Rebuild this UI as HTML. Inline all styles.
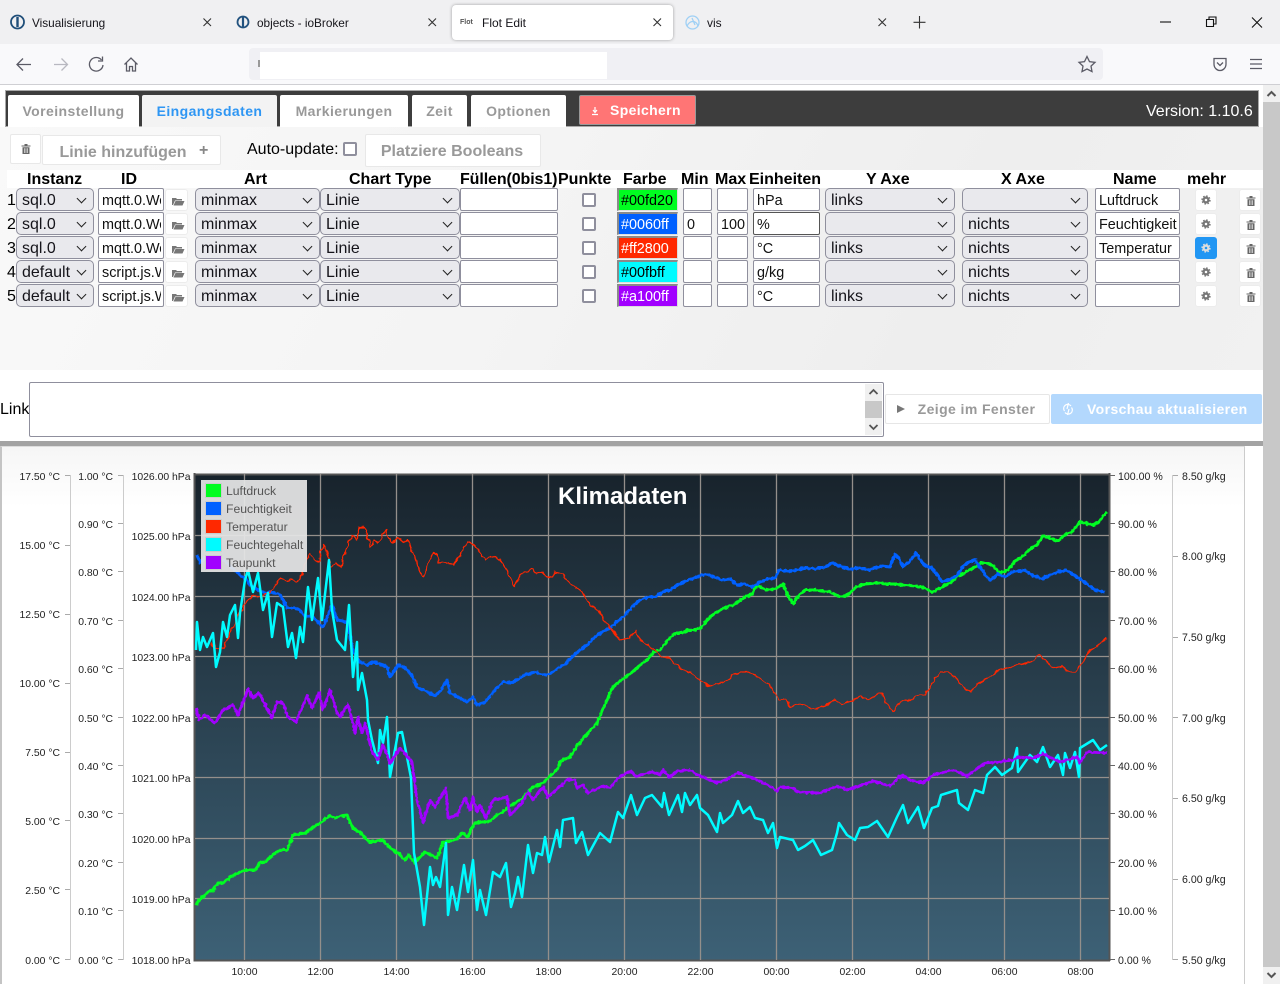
<!DOCTYPE html>
<html lang="de"><head><meta charset="utf-8"><title>Flot Edit</title>
<style>
*{box-sizing:border-box}
html,body{margin:0;padding:0;width:1280px;height:984px;overflow:hidden;background:#fff;font-family:"Liberation Sans",Arial,sans-serif;color:#000}
.a{position:absolute}
.t{position:absolute;font-size:12px;line-height:14px;color:#15141a;white-space:nowrap}
.tab{position:absolute;top:95px;height:32px;background:#fff;border-radius:2px 2px 0 0;color:#999;font-weight:bold;font-size:14px;letter-spacing:.42px;text-align:center;line-height:33px}
.btn{position:absolute;background:#fff;border:1px solid #e8e8e8;border-radius:2px;color:#999;font-weight:bold;font-size:16px;text-align:center}
.h{position:absolute;top:171px;font-size:16px;font-weight:bold;line-height:17px;white-space:nowrap}
.n{position:absolute;left:7px;font-size:16px;line-height:24px}
.s{position:absolute;height:23px;background:#e9e9ed;border:1px solid #8f8f9d;border-radius:5px;font-size:16px;line-height:23px;padding-left:5px;white-space:nowrap;overflow:hidden;color:#15141a}
.s:after{content:"";position:absolute;right:8px;top:6px;width:6px;height:6px;border-right:1.6px solid #222;border-bottom:1.6px solid #222;transform:rotate(45deg)}
.i{position:absolute;height:23px;background:#fff;border:1px solid #8f8f9d;border-radius:2px;font-size:14.4px;line-height:24px;padding-left:3px;white-space:nowrap;overflow:hidden;color:#111}
.i span{display:block;width:59px;overflow:hidden}
.c{position:absolute;left:582px;width:14px;height:14px;border:2px solid #8f8f9d;border-radius:2px;background:#fff}
.f{position:absolute;left:617px;width:61px;height:23px;border-top:2px solid #8a8a8a;border-left:2px solid #8a8a8a;border-right:1px solid #ddd;border-bottom:1px solid #ddd;font-size:14.4px;line-height:23px;padding-left:2px;white-space:nowrap;overflow:hidden}
.ib{position:absolute;width:22px;height:22px;background:#fff;border:1px solid #ececec;border-radius:3px}
.ib svg{position:absolute;left:5px;top:5px}
.ib.g svg{left:5px;top:5px}
text{font-family:"Liberation Sans",Arial,sans-serif}
</style></head><body>
<svg width="0" height="0" style="position:absolute"><defs>
<symbol id="tr" viewBox="0 0 12 12"><path d="M1.500 2.500H10.500V3.500H1.500ZM4.500 1H7.500V2.500H4.500ZM2.500 4.300H9.500V11H2.500Z" fill="currentColor"/><path d="M4.500 5.300V10M6 5.300V10M7.500 5.300V10" stroke="#fff" stroke-width=".6"/></symbol>
<symbol id="ge" viewBox="0 0 12 12"><circle cx="6" cy="6" r="2.900" fill="none" stroke="currentColor" stroke-width="2.800"/><circle cx="6" cy="6" r="4.700" fill="none" stroke="currentColor" stroke-width="1.800" stroke-dasharray="1.900 1.790"/></symbol>
<symbol id="fo" viewBox="0 0 14 12"><path d="M1 3H5L6 4H11V5.500H4L2 10H1ZM4.500 6H13.500L11.500 10.500H2.500Z" fill="currentColor"/></symbol>
<filter id="jg" filterUnits="userSpaceOnUse" x="190" y="470" width="925" height="495"><feTurbulence type="fractalNoise" baseFrequency="0.35" numOctaves="1" seed="4" result="n"/><feDisplacementMap in="SourceGraphic" in2="n" scale="3.500" xChannelSelector="R" yChannelSelector="G"/></filter>
<filter id="jr" filterUnits="userSpaceOnUse" x="190" y="470" width="925" height="495"><feTurbulence type="fractalNoise" baseFrequency="0.22" numOctaves="1" seed="9" result="n"/><feDisplacementMap in="SourceGraphic" in2="n" scale="5" xChannelSelector="R" yChannelSelector="G"/></filter>
</defs></svg>

<!-- browser chrome -->
<div class="a" style="left:0;top:0;width:1280px;height:44px;background:#f0f0f2"></div>
<div class="a" style="left:0;top:44px;width:1280px;height:40px;background:#f9f9fb"></div>
<div class="a" style="left:0;top:84px;width:1280px;height:1px;background:#cfcfd3"></div>
<div class="a" style="left:452px;top:5px;width:221px;height:35px;background:#fff;border-radius:4px;box-shadow:0 0 3px rgba(0,0,0,.35)"></div>
<div class="a" style="left:249px;top:48px;width:854px;height:32px;background:#f0f0f4;border-radius:4px"></div>
<div class="a" style="left:260px;top:52px;width:347px;height:27px;background:#fff"></div>
<div class="a" style="left:258px;top:60px;width:2px;height:7px;background:#999"></div>
<svg class="a" style="left:0;top:0" width="1280" height="84" fill="none">
<g stroke="#1f4e79" stroke-width="1.800"><circle cx="17.500" cy="22" r="6.500"/><path d="M17.500 17V27" stroke-width="2.400"/></g>
<g stroke="#22527f" stroke-width="1.800"><circle cx="243" cy="22" r="5.500"/><path d="M243 17V27" stroke-width="2.200"/></g>
<g stroke="#9fd0f5" stroke-width="1.300"><circle cx="692.500" cy="22.500" r="6.500"/><path d="M692 18L695 25M687 26C690 20 696 20 698 26"/></g>
<g stroke="#333" stroke-width="1.100"><path d="M203.500 18.500L211 26M211 18.500L203.500 26M428.500 18.500L436 26M436 18.500L428.500 26M653.500 18.500L661 26M661 18.500L653.500 26M878.500 18.500L886 26M886 18.500L878.500 26"/><path d="M919.500 16V28.500M913.500 22.300H925.500"/>
<path d="M1160 22H1171" stroke="#111"/><path d="M1206.500 19.500H1213.500V26.500H1206.500ZM1209 19.500V17H1216V24H1213.500" stroke="#111"/><path d="M1252 17.500L1262 27.500M1262 17.500L1252 27.500" stroke="#111"/></g>
<g stroke="#5b5b66" stroke-width="1.300"><path d="M31 64.500H17.500M23 58.500L17 64.500L23 70.500"/><path d="M54 64.500H67.500M61.500 58.500L67.500 64.500L61.500 70.500" stroke="#b8b8c0"/>
<path d="M101.500 60A6.800 6.800 0 1 0 103 65" /><path d="M102.500 56.500V61H98"/><path d="M124.500 64.500L131 58L137.500 64.500M126.500 63V71H129.500V66.500H132.500V71H135.500V63"/>
<path d="M1087 56.500L1089.500 61.600L1095 62.300L1091 66.100L1092 71.600L1087 69L1082 71.600L1083 66.100L1079 62.300L1084.500 61.600Z"/>
<path d="M1214 58.500H1226V64C1226 68 1223 70.500 1220 70.500C1217 70.500 1214 68 1214 64Z"/><path d="M1217 62.500L1220 65.500L1223 62.500"/><path d="M1250 59.500H1262M1250 64H1262M1250 68.500H1262"/></g>
</svg>
<div class="t" style="left:32px;top:16px;font-size:11.800px">Visualisierung</div>
<div class="t" style="left:257px;top:16px;font-size:11.800px">objects - ioBroker</div>
<div class="t" style="left:482px;top:16px">Flot Edit</div>
<div class="t" style="left:460px;top:18px;font-size:7px;line-height:9px;font-weight:bold;color:#555">Flot</div>
<div class="t" style="left:707px;top:16px">vis</div>

<!-- scrollbar -->
<div class="a" style="left:1263px;top:85px;width:17px;height:899px;background:#f0f0f0"></div>
<div class="a" style="left:1263px;top:102px;width:17px;height:865px;background:#c8c8c8"></div>
<svg class="a" style="left:1263px;top:85px" width="17" height="899" fill="none" stroke="#555" stroke-width="2"><path d="M4.500 11L8.500 7L12.500 11"/><path d="M4.500 888L8.500 892L12.500 888"/></svg>

<!-- editor panel -->
<div class="a" style="left:0;top:127px;width:1263px;height:243px;background:linear-gradient(115deg,#f9f9f9 0%,#f4f4f4 40%,#eeeeee 75%,#f1f1f1 100%)"></div>
<div class="a" style="left:5px;top:90px;width:1254px;height:37px;background:#3d3d3d;border:1px solid #a8a8a8;border-bottom:1px solid #aaa"></div>
<div class="tab" style="left:8px;width:131px">Voreinstellung</div>
<div class="tab" style="left:142px;width:135px;color:#2e96f3;background:#f3f3f3">Eingangsdaten</div>
<div class="tab" style="left:280px;width:128px">Markierungen</div>
<div class="tab" style="left:412px;width:55px">Zeit</div>
<div class="tab" style="left:471px;width:95px">Optionen</div>
<div class="a" style="left:579px;top:95px;width:117px;height:30px;background:#ff7575;border:1px solid #999;border-radius:2px;color:#fff;font-weight:bold;font-size:14px;letter-spacing:.35px;line-height:28px;padding-left:30px">Speichern</div>
<svg class="a" style="left:590px;top:106px" width="10" height="10" fill="none" stroke="#fff" stroke-width="1.200"><path d="M5 1V6M3 4L5 6.500L7 4M2 8.500H8"/></svg>
<div class="a" style="left:1146px;top:102px;color:#fff;font-size:16px;line-height:19px;white-space:nowrap">Version: 1.10.6</div>

<div class="btn" style="left:10px;top:134px;width:31px;height:30px;color:#666"><svg class="a" style="left:9px;top:8px" width="12" height="12"><use href="#tr"/></svg></div>
<div class="btn" style="left:42px;top:135px;width:179px;height:30px;line-height:33px;padding-right:17px">Linie hinzufügen</div>
<div class="a" style="left:199px;top:143px;color:#888;font-weight:bold;font-size:16px;line-height:16px">+</div>
<div class="a" style="left:247px;top:141px;font-size:16px;line-height:18px;white-space:nowrap">Auto-update:</div>
<div class="a" style="left:343px;top:142px;width:14px;height:14px;border:2px solid #8f8f9d;border-radius:2px;background:#fff"></div>
<div class="btn" style="left:365px;top:134px;width:176px;height:33px;line-height:33px;padding-right:2px">Platziere Booleans</div>

<!-- table header -->
<div class="a" style="left:7px;top:170px;width:1256px;height:18px;background:#fff"></div>
<div class="h" style="left:27px">Instanz</div><div class="h" style="left:121px">ID</div><div class="h" style="left:244px">Art</div><div class="h" style="left:349px">Chart Type</div><div class="h" style="left:460px;letter-spacing:-.1px">Füllen(0bis1)</div><div class="h" style="left:558px">Punkte</div><div class="h" style="left:623px">Farbe</div><div class="h" style="left:681px">Min</div><div class="h" style="left:715px">Max</div><div class="h" style="left:749px">Einheiten</div><div class="h" style="left:866px">Y Axe</div><div class="h" style="left:1001px">X Axe</div><div class="h" style="left:1113px">Name</div><div class="h" style="left:1187px">mehr</div>

<!-- row 1 -->
<div class="n" style="top:189px">1</div>
<div class="s" style="left:16px;top:188px;width:78px">sql.0</div>
<div class="i" style="left:98px;top:188px;width:66px"><span>mqtt.0.Wo</span></div>
<div class="ib" style="left:165px;top:189px;width:23px;color:#777"><svg width="14" height="12"><use href="#fo"/></svg></div>
<div class="s" style="left:195px;top:188px;width:125px">minmax</div>
<div class="s" style="left:320px;top:188px;width:140px">Linie</div>
<div class="i" style="left:460px;top:188px;width:98px"></div>
<div class="c" style="top:193px"></div>
<div class="f" style="top:188px;background:#00fd20;color:#000">#00fd20</div>
<div class="i" style="left:683px;top:188px;width:29px"></div>
<div class="i" style="left:717px;top:188px;width:31px"></div>
<div class="i" style="left:753px;top:188px;width:67px">hPa</div>
<div class="s" style="left:825px;top:188px;width:130px">links</div>
<div class="s" style="left:962px;top:188px;width:126px"></div>
<div class="i" style="left:1095px;top:188px;width:85px">Luftdruck</div>
<div class="ib g" style="left:1195px;top:189px;color:#777"><svg width="10" height="10"><use href="#ge"/></svg></div>
<div class="ib" style="left:1239px;top:189px;color:#666"><svg width="12" height="12"><use href="#tr"/></svg></div>
<!-- row 2 -->
<div class="n" style="top:213px">2</div>
<div class="s" style="left:16px;top:212px;width:78px">sql.0</div>
<div class="i" style="left:98px;top:212px;width:66px"><span>mqtt.0.Wo</span></div>
<div class="ib" style="left:165px;top:213px;width:23px;color:#777"><svg width="14" height="12"><use href="#fo"/></svg></div>
<div class="s" style="left:195px;top:212px;width:125px">minmax</div>
<div class="s" style="left:320px;top:212px;width:140px">Linie</div>
<div class="i" style="left:460px;top:212px;width:98px"></div>
<div class="c" style="top:217px"></div>
<div class="f" style="top:212px;background:#0060ff;color:#fff">#0060ff</div>
<div class="i" style="left:683px;top:212px;width:29px">0</div>
<div class="i" style="left:717px;top:212px;width:31px">100</div>
<div class="i" style="left:753px;top:212px;width:67px;border-color:#555">%</div>
<div class="s" style="left:825px;top:212px;width:130px"></div>
<div class="s" style="left:962px;top:212px;width:126px">nichts</div>
<div class="i" style="left:1095px;top:212px;width:85px">Feuchtigkeit</div>
<div class="ib g" style="left:1195px;top:213px;color:#777"><svg width="10" height="10"><use href="#ge"/></svg></div>
<div class="ib" style="left:1239px;top:213px;color:#666"><svg width="12" height="12"><use href="#tr"/></svg></div>
<!-- row 3 -->
<div class="n" style="top:237px">3</div>
<div class="s" style="left:16px;top:236px;width:78px">sql.0</div>
<div class="i" style="left:98px;top:236px;width:66px"><span>mqtt.0.Wo</span></div>
<div class="ib" style="left:165px;top:237px;width:23px;color:#777"><svg width="14" height="12"><use href="#fo"/></svg></div>
<div class="s" style="left:195px;top:236px;width:125px">minmax</div>
<div class="s" style="left:320px;top:236px;width:140px">Linie</div>
<div class="i" style="left:460px;top:236px;width:98px"></div>
<div class="c" style="top:241px"></div>
<div class="f" style="top:236px;background:#ff2800;color:#fff">#ff2800</div>
<div class="i" style="left:683px;top:236px;width:29px"></div>
<div class="i" style="left:717px;top:236px;width:31px"></div>
<div class="i" style="left:753px;top:236px;width:67px">°C</div>
<div class="s" style="left:825px;top:236px;width:130px">links</div>
<div class="s" style="left:962px;top:236px;width:126px">nichts</div>
<div class="i" style="left:1095px;top:236px;width:85px">Temperatur</div>
<div class="ib g" style="left:1195px;top:237px;color:#ddd;background:#2196f3;border-color:#2196f3"><svg width="10" height="10"><use href="#ge"/></svg></div>
<div class="ib" style="left:1239px;top:237px;color:#666"><svg width="12" height="12"><use href="#tr"/></svg></div>
<!-- row 4 -->
<div class="n" style="top:261px">4</div>
<div class="s" style="left:16px;top:260px;width:78px">default</div>
<div class="i" style="left:98px;top:260px;width:66px"><span>script.js.W</span></div>
<div class="ib" style="left:165px;top:261px;width:23px;color:#777"><svg width="14" height="12"><use href="#fo"/></svg></div>
<div class="s" style="left:195px;top:260px;width:125px">minmax</div>
<div class="s" style="left:320px;top:260px;width:140px">Linie</div>
<div class="i" style="left:460px;top:260px;width:98px"></div>
<div class="c" style="top:265px"></div>
<div class="f" style="top:260px;background:#00fbff;color:#000">#00fbff</div>
<div class="i" style="left:683px;top:260px;width:29px"></div>
<div class="i" style="left:717px;top:260px;width:31px"></div>
<div class="i" style="left:753px;top:260px;width:67px">g/kg</div>
<div class="s" style="left:825px;top:260px;width:130px"></div>
<div class="s" style="left:962px;top:260px;width:126px">nichts</div>
<div class="i" style="left:1095px;top:260px;width:85px"></div>
<div class="ib g" style="left:1195px;top:261px;color:#777"><svg width="10" height="10"><use href="#ge"/></svg></div>
<div class="ib" style="left:1239px;top:261px;color:#666"><svg width="12" height="12"><use href="#tr"/></svg></div>
<!-- row 5 -->
<div class="n" style="top:285px">5</div>
<div class="s" style="left:16px;top:284px;width:78px">default</div>
<div class="i" style="left:98px;top:284px;width:66px"><span>script.js.W</span></div>
<div class="ib" style="left:165px;top:285px;width:23px;color:#777"><svg width="14" height="12"><use href="#fo"/></svg></div>
<div class="s" style="left:195px;top:284px;width:125px">minmax</div>
<div class="s" style="left:320px;top:284px;width:140px">Linie</div>
<div class="i" style="left:460px;top:284px;width:98px"></div>
<div class="c" style="top:289px"></div>
<div class="f" style="top:284px;background:#a100ff;color:#fff">#a100ff</div>
<div class="i" style="left:683px;top:284px;width:29px"></div>
<div class="i" style="left:717px;top:284px;width:31px"></div>
<div class="i" style="left:753px;top:284px;width:67px">°C</div>
<div class="s" style="left:825px;top:284px;width:130px">links</div>
<div class="s" style="left:962px;top:284px;width:126px">nichts</div>
<div class="i" style="left:1095px;top:284px;width:85px"></div>
<div class="ib g" style="left:1195px;top:285px;color:#777"><svg width="10" height="10"><use href="#ge"/></svg></div>
<div class="ib" style="left:1239px;top:285px;color:#666"><svg width="12" height="12"><use href="#tr"/></svg></div>

<!-- link row -->
<div class="a" style="left:0;top:401px;font-size:16px;line-height:18px">Link</div>
<div class="a" style="left:29px;top:382px;width:855px;height:55px;background:#fff;border:1px solid #8f8f9d;border-radius:2px"></div>
<div class="a" style="left:865px;top:384px;width:17px;height:51px;background:#f0f0f0"></div>
<div class="a" style="left:865px;top:401px;width:17px;height:17px;background:#c8c8c8"></div>
<svg class="a" style="left:865px;top:384px" width="17" height="51" fill="none" stroke="#555" stroke-width="1.800"><path d="M4.500 10L8.500 6L12.500 10"/><path d="M4.500 41L8.500 45L12.500 41"/></svg>
<div class="btn" style="left:885px;top:394px;width:165px;height:30px;font-size:14px;letter-spacing:.4px;line-height:29px;padding-left:18px;border-color:#e6e6e6">Zeige im Fenster</div>
<div class="a" style="left:897px;top:405px;width:0;height:0;border-left:8px solid #777;border-top:4px solid transparent;border-bottom:4px solid transparent"></div>
<div class="a" style="left:1051px;top:394px;width:211px;height:30px;background:#b3d8fd;border-radius:2px;color:#fff;font-weight:bold;font-size:14px;letter-spacing:.38px;line-height:30px;padding-left:36px;white-space:nowrap">Vorschau aktualisieren</div>
<svg class="a" style="left:1061px;top:402px" width="14" height="14" fill="none" stroke="#fff" stroke-width="1.200"><path d="M10 4A4 4 0 0 0 3.500 9M4 10.500A4 4 0 0 0 10.500 5.500M7.500 1L6 7M8 7L6.500 13"/></svg>

<!-- chart -->
<div class="a" style="left:0;top:441px;width:1263px;height:5px;background:#a3a3a3"></div>
<div class="a" style="left:0;top:446px;width:1245px;height:538px;background:linear-gradient(#f6f6f6,#ffffff 60px);border-left:2px solid #c4c4c4;border-top:1px solid #ddd;border-right:1px solid #ccc"></div>
<svg class="a" style="left:0;top:0" width="1280" height="984">
<defs><linearGradient id="pg" x1="0" y1="0" x2="0" y2="1"><stop offset="0" stop-color="#18232c"/><stop offset="1" stop-color="#3d6176"/></linearGradient></defs>
<rect x="195" y="474" width="914" height="486" fill="url(#pg)"/>
<path d="M195 474.500H1110M194.500 473V961.500M194 960.500H1110M1109.500 473V961" stroke="#555" stroke-width="2" fill="none"/>
<path d="M244.500 474V960M320.500 474V960M396.500 474V960M472.500 474V960M548.500 474V960M624.500 474V960M700.500 474V960M776.500 474V960M852.500 474V960M928.500 474V960M1004.500 474V960M1080.500 474V960M195 535.500H1109M195 596.500H1109M195 656.500H1109M195 717.500H1109M195 777.500H1109M195 838.500H1109M195 898.500H1109" stroke="#948f8b" stroke-width="1.300" fill="none"/>
<g fill="none" stroke-linejoin="round">
<polyline filter="url(#jg)" stroke="#00fd20" stroke-width="3" points="196,905 200,899 204,896 208,892 213,890 218,883 223,883 230,877 238,873 245,870 255,870 258,866 260,862 264,863 268,859 275,853 280,850 287,850 290,843 293,835 299,834 305,833 311,829 317,825 322,822 326,818 330,816 335,818 340,816 347,815 350,822 353,828 358,831 363,835 367,840 370,842 376,841 383,840 388,846 393,850 399,854 405,860 408,855 412,859 415,863 420,857 425,852 431,855 437,858 440,851 442,843 450,841 457,839 462,833 468,837 471,830 475,823 482,822 490,821 497,815 503,812 507,808 515,803 523,798 528,792 532,788 538,785 543,783 550,776 557,770 560,762 565,759 570,757 575,749 580,742 588,733 597,723 602,711 607,700 611,690 615,685 620,681 628,675 634,671 640,665 648,659 654,652 660,650 668,640 675,633 682,633 688,630 695,630 702,627 708,619 715,613 722,609 735,604 745,597 752,594 757,585 765,590 775,589 783,584 788,596 793,604 799,595 805,590 815,590 822,591 830,592 840,597 848,595 856,587 865,584 877,583 887,584 897,584 905,585 915,586 925,588 932,592 940,588 950,583 958,576 968,571 975,567 981,563 987,563 993,566 1000,573 1008,570 1015,561 1022,557 1030,549 1037,545 1043,536 1050,538 1058,541 1066,534 1072,532 1080,522 1085,523 1093,525 1099,522 1104,515 1107,512"/>
<polyline filter="url(#jg)" stroke="#0060ff" stroke-width="3" points="197,555 200,563 206,556 215,557 225,561 232,568 240,575 245,578 250,585 258,590 265,593 272,592 280,595 284,602 287,608 294,608 300,610 305,617 312,616 318,622 323,627 328,615 332,605 337,620 343,621 347,623 350,635 353,652 360,662 367,665 373,662 380,664 387,667 390,677 394,671 398,665 405,668 410,673 414,680 417,687 423,690 430,693 435,696 441,690 447,680 450,693 458,697 467,702 473,697 477,705 485,702 493,692 503,682 510,683 517,680 525,675 535,672 543,675 550,674 558,668 565,664 572,657 580,650 587,645 595,637 602,632 610,628 618,621 625,615 632,607 640,600 648,597 655,597 663,592 670,590 678,585 688,580 697,577 705,574 714,577 722,580 730,579 737,585 745,584 752,587 760,582 768,579 775,578 779,570 788,571 797,570 806,568 815,569 825,567 832,563 842,567 850,569 860,568 869,570 875,568 882,566 890,567 895,554 899,558 903,567 910,561 916,553 924,565 932,568 938,576 942,582 950,579 957,576 964,565 969,562 975,560 982,570 987,577 991,580 998,574 1005,577 1012,572 1018,571 1024,570 1032,575 1042,579 1050,575 1058,572 1066,570 1074,575 1080,579 1087,584 1095,590 1105,592"/>
<polyline filter="url(#jr)" stroke="#ff2800" stroke-width="1.300" points="210,643 215,647 220,649 224,648 227,640 230,632 233,627 238,616 243,607 247,601 253,595 257,598 263,596 270,592 275,585 280,578 287,581 291,580 297,582 302,574 306,562 310,553 314,558 318,562 321,552 324,545 328,556 331,567 336,563 341,567 346,550 351,535 354,536 357,540 359,527 365,527 368,538 371,547 375,540 378,544 382,536 386,530 389,538 392,543 398,538 403,542 408,540 413,552 418,566 423,577 428,565 433,553 436,554 439,563 445,562 453,565 459,556 463,550 467,542 472,544 478,549 482,556 486,560 491,556 498,558 503,564 508,573 514,587 518,580 522,574 527,572 531,569 537,574 542,572 547,577 552,577 555,572 562,574 568,581 575,587 583,593 590,605 598,610 605,622 612,630 620,640 628,638 636,631 640,640 648,645 655,650 660,655 668,658 675,664 683,670 690,672 700,680 708,686 716,684 724,682 732,676 740,672 748,672 755,675 762,680 770,685 775,694 780,700 786,699 790,707 797,704 805,705 812,709 820,708 827,704 835,700 842,704 850,701 860,697 868,700 875,695 882,694 888,706 893,712 899,704 905,700 912,700 919,695 925,695 932,683 940,672 948,672 955,677 962,686 970,692 978,684 985,680 993,674 1000,670 1008,668 1015,665 1022,664 1030,662 1040,655 1048,663 1055,668 1062,666 1070,672 1075,672 1082,664 1090,650 1098,645 1107,638"/>
<polyline stroke="#00fbff" stroke-width="2.500" points="196,650 197,622 200,650 203,637 207,647 213,633 216,667 220,652 223,622 227,637 230,615 235,605 238,638 240,613 245,580 248,570 253,592 258,573 263,610 268,593 272,637 277,603 283,607 288,647 292,633 296,658 300,627 303,642 308,587 312,620 318,578 322,620 329,560 332,610 337,640 345,650 349,605 353,677 357,642 358,690 362,673 367,700 368,720 372,740 378,763 380,730 383,743 387,717 390,777 398,733 402,732 407,757 411,778 414,853 420,887 424,925 430,867 433,885 436,877 440,887 446,843 448,915 452,887 457,910 464,865 468,892 473,860 477,910 480,890 486,915 493,872 500,877 506,863 511,907 515,893 518,877 522,897 528,845 533,873 537,853 542,855 545,837 549,862 557,830 560,847 563,820 573,818 576,843 582,832 588,855 600,833 610,842 618,812 623,818 631,795 637,815 645,798 652,795 662,807 664,793 669,815 678,795 682,812 685,793 690,805 697,795 700,808 708,815 717,832 720,813 723,823 732,815 738,801 743,813 750,807 755,818 763,820 768,833 773,823 777,848 780,837 793,840 798,850 805,846 813,840 821,855 832,850 837,833 839,823 847,835 855,840 860,828 868,827 877,821 888,837 897,817 903,805 908,823 913,815 918,807 924,828 932,808 938,806 941,795 957,790 959,803 968,810 975,790 983,793 987,775 995,767 1002,775 1012,768 1017,748 1018,772 1030,755 1037,762 1043,747 1050,767 1058,755 1063,775 1065,753 1070,768 1075,752 1079,777 1080,748 1093,740 1100,750 1107,745"/>
<polyline filter="url(#jg)" stroke="#a100ff" stroke-width="2.800" points="196,708 199,720 205,715 215,723 223,710 233,705 238,715 248,689 253,698 259,693 272,718 277,702 283,703 288,717 296,722 307,696 312,708 319,693 323,710 330,690 337,713 340,717 348,704 355,733 358,717 362,733 365,723 372,752 378,760 383,745 390,763 400,748 412,762 417,800 423,823 430,800 435,807 446,788 448,818 457,815 465,798 470,810 473,797 477,812 480,805 486,818 493,800 507,797 510,815 522,803 528,792 533,800 543,787 548,797 567,780 575,780 577,788 583,785 588,793 603,786 610,788 618,778 630,771 637,777 640,775 652,772 660,775 663,770 669,777 678,771 690,770 698,775 717,783 725,780 738,773 753,778 768,785 777,791 780,787 793,788 798,792 820,793 837,786 847,790 873,781 890,786 902,775 910,780 923,783 933,775 953,770 967,776 985,763 997,762 1013,760 1018,757 1033,758 1043,754 1060,762 1077,757 1080,763 1087,752 1107,753"/>
</g>
<text x="558" y="504" font-size="24" font-weight="bold" fill="#fff">Klimadaten</text>
<rect x="201" y="480" width="106" height="92" fill="#e6e6e6" fill-opacity=".93"/>
<g stroke="#ccc" stroke-width="1"><rect x="205.500" y="483.500" width="16" height="14" fill="#00fd20"/><rect x="205.500" y="501.500" width="16" height="14" fill="#0060ff"/><rect x="205.500" y="519.500" width="16" height="14" fill="#ff2800"/><rect x="205.500" y="537.500" width="16" height="14" fill="#00fbff"/><rect x="205.500" y="555.500" width="16" height="14" fill="#a100ff"/></g>
<g font-size="12.200" fill="#545454"><text x="226" y="495">Luftdruck</text><text x="226" y="513">Feuchtigkeit</text><text x="226" y="531">Temperatur</text><text x="226" y="549">Feuchtegehalt</text><text x="226" y="567">Taupunkt</text></g>
<path d="M70.500 475V960M123.500 475V960M1172.500 475V960" stroke="#ccc" fill="none"/>
<path d="M65 475.500H70M65 545.500H70M65 614.500H70M65 683.500H70M65 752.500H70M65 820.500H70M65 889.500H70M65 959.500H70M118 475.500H123M118 523.500H123M118 571.500H123M118 620.500H123M118 668.500H123M118 717.500H123M118 765.500H123M118 813.500H123M118 862.500H123M118 910.500H123M118 959.500H123M1173 475.500H1178M1173 556.500H1178M1173 637.500H1178M1173 717.500H1178M1173 798.500H1178M1173 879.500H1178M1173 959.500H1178" stroke="#aaa" fill="none"/>
<path d="M1110 475.500H1115M1110 523.500H1115M1110 571.500H1115M1110 620.500H1115M1110 668.500H1115M1110 717.500H1115M1110 765.500H1115M1110 813.500H1115M1110 862.500H1115M1110 910.500H1115M1110 959.500H1115" stroke="#666" fill="none"/>
<g font-size="10.400" fill="#222" text-anchor="end">
<text x="60" y="480">17.50 °C</text><text x="60" y="549">15.00 °C</text><text x="60" y="618">12.50 °C</text><text x="60" y="687">10.00 °C</text><text x="60" y="756">7.50 °C</text><text x="60" y="825">5.00 °C</text><text x="60" y="894">2.50 °C</text><text x="60" y="964">0.00 °C</text>
<text x="113" y="480">1.00 °C</text><text x="113" y="528">0.90 °C</text><text x="113" y="576">0.80 °C</text><text x="113" y="625">0.70 °C</text><text x="113" y="673">0.60 °C</text><text x="113" y="722">0.50 °C</text><text x="113" y="770">0.40 °C</text><text x="113" y="818">0.30 °C</text><text x="113" y="867">0.20 °C</text><text x="113" y="915">0.10 °C</text><text x="113" y="964">0.00 °C</text>
<text x="190.500" y="480">1026.00 hPa</text><text x="190.500" y="540">1025.00 hPa</text><text x="190.500" y="601">1024.00 hPa</text><text x="190.500" y="661">1023.00 hPa</text><text x="190.500" y="722">1022.00 hPa</text><text x="190.500" y="782">1021.00 hPa</text><text x="190.500" y="843">1020.00 hPa</text><text x="190.500" y="903">1019.00 hPa</text><text x="190.500" y="964">1018.00 hPa</text>
</g>
<g font-size="10.600" fill="#222">
<text x="1118" y="480">100.00 %</text><text x="1118" y="528">90.00 %</text><text x="1118" y="576">80.00 %</text><text x="1118" y="625">70.00 %</text><text x="1118" y="673">60.00 %</text><text x="1118" y="722">50.00 %</text><text x="1118" y="770">40.00 %</text><text x="1118" y="818">30.00 %</text><text x="1118" y="867">20.00 %</text><text x="1118" y="915">10.00 %</text><text x="1118" y="964">0.00 %</text>
<text x="1182" y="480">8.50 g/kg</text><text x="1182" y="560">8.00 g/kg</text><text x="1182" y="641">7.50 g/kg</text><text x="1182" y="722">7.00 g/kg</text><text x="1182" y="802">6.50 g/kg</text><text x="1182" y="883">6.00 g/kg</text><text x="1182" y="964">5.50 g/kg</text>
</g>
<g font-size="10.400" fill="#222" text-anchor="middle"><text x="244.500" y="975">10:00</text><text x="320.500" y="975">12:00</text><text x="396.500" y="975">14:00</text><text x="472.500" y="975">16:00</text><text x="548.500" y="975">18:00</text><text x="624.500" y="975">20:00</text><text x="700.500" y="975">22:00</text><text x="776.500" y="975">00:00</text><text x="852.500" y="975">02:00</text><text x="928.500" y="975">04:00</text><text x="1004.500" y="975">06:00</text><text x="1080.500" y="975">08:00</text></g>
</svg>
</body></html>
